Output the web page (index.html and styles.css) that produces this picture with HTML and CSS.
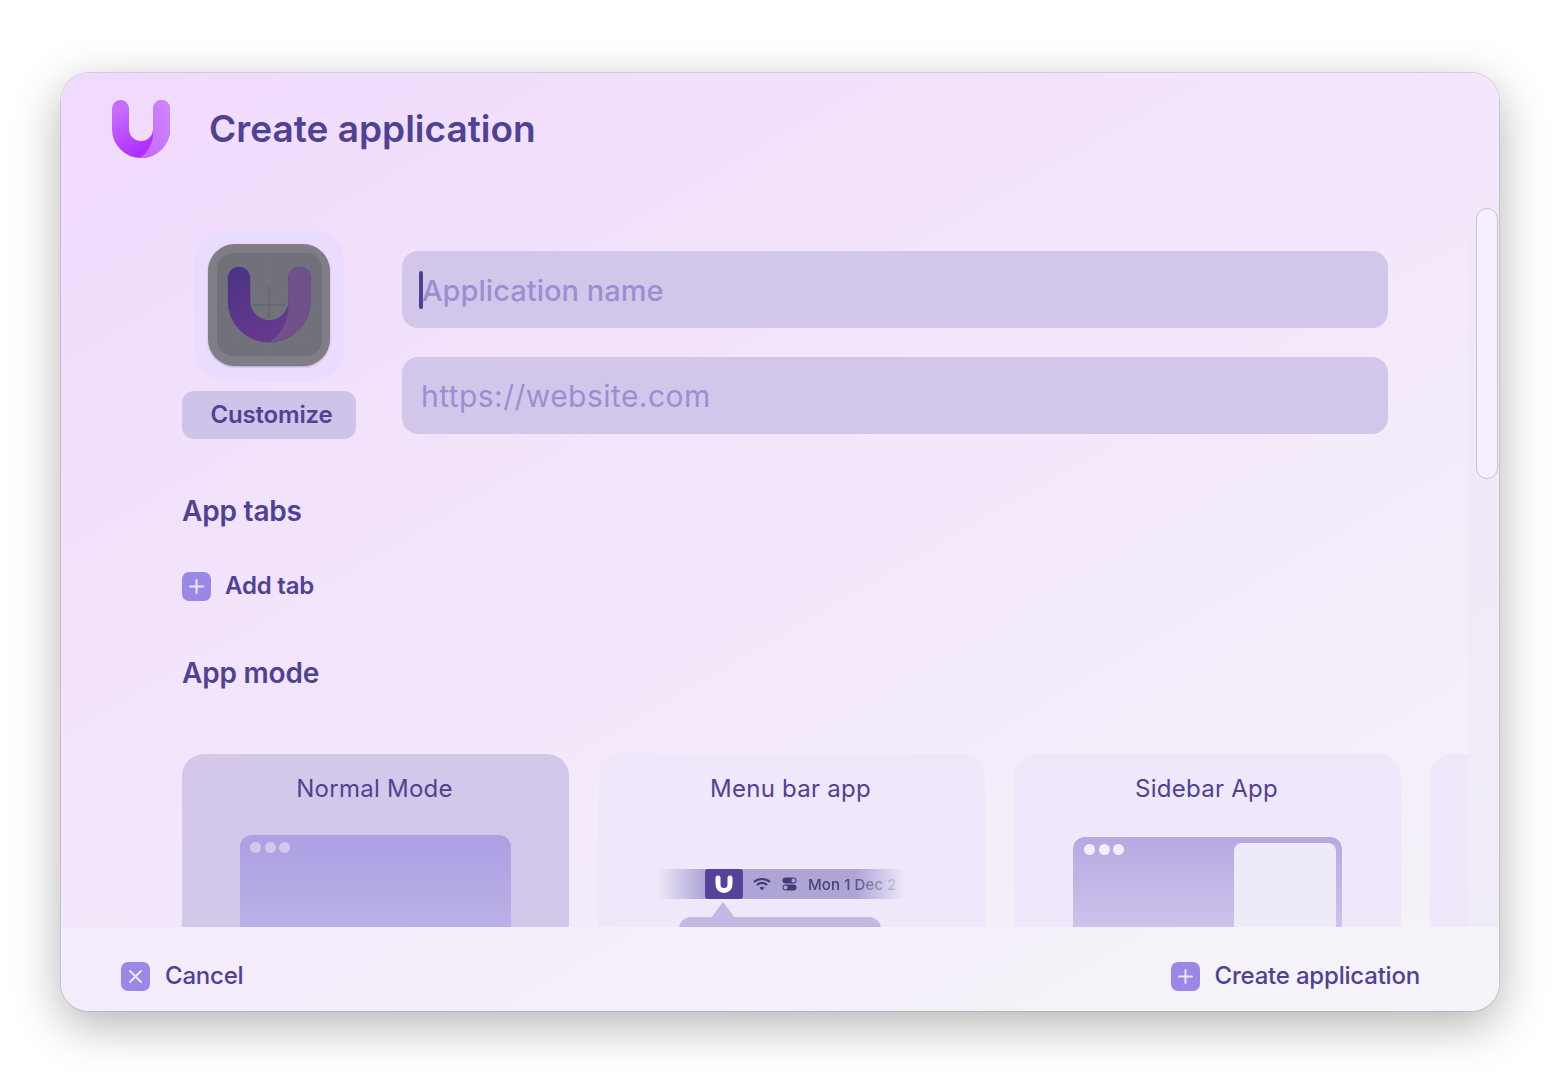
FILE: index.html
```html
<!DOCTYPE html>
<html lang="en">
<head>
<meta charset="utf-8">
<title>Create application</title>
<link rel="stylesheet" href="styles.css">
</head>
<body>
<div class="window">
  <svg width="0" height="0" class="defs">
    <defs>
      <linearGradient id="logoLeft" x1="0" y1="0" x2="0.6" y2="1">
        <stop offset="0" stop-color="#c76cff"/><stop offset="1" stop-color="#b02fff"/>
      </linearGradient>
      <linearGradient id="logoRight" x1="1" y1="0" x2="0" y2="1">
        <stop offset="0" stop-color="#cf86ff"/><stop offset="1" stop-color="#c469fb"/>
      </linearGradient>
      <linearGradient id="iconLeft" x1="0" y1="0" x2="0.6" y2="1">
        <stop offset="0" stop-color="#4f3486"/><stop offset="1" stop-color="#65388f"/>
      </linearGradient>
    </defs>
  </svg>
  <header class="header">
    <svg class="logo" viewBox="0 0 58 58" width="58" height="58" aria-hidden="true">
      <path d="M8.5 8.5V29A20.5 20.5 0 0 0 49.5 29V8.5" fill="none" stroke="url(#logoLeft)" stroke-width="17" stroke-linecap="round"/>
      <path d="M41 8.5A8.5 8.5 0 0 1 58 8.5V29A29 29 0 0 1 28 58C34 54 39 47 41 37Z" fill="url(#logoRight)"/>
    </svg>
    <h1 class="title">Create application</h1>
  </header>

  <div class="main">
    <div class="content">
      <section class="form-row">
        <div class="icon-col">
          <div class="icon-tile">
            <div class="app-icon">
              <div class="app-icon-inner"></div>
              <svg class="app-icon-art" viewBox="0 0 122 122" width="122" height="122" aria-hidden="true">
                <path d="M61 12V110M12 61H110M20 20L102 102M102 20L20 102" stroke="#787981" stroke-width=".8" fill="none"/>
                <path d="M31 34V57A30 30 0 0 0 91.5 57V34" fill="none" stroke="url(#iconLeft)" stroke-width="22.5" stroke-linecap="round"/>
                <path d="M80.25 34A11.25 11.25 0 0 1 102.75 34V57A41.25 41.25 0 0 1 61.5 98.25C70 92 78 84 80.25 66Z" fill="#71518a"/>
                <path d="M61 42V74M45 61H77" stroke="#64656e" stroke-width="1.4" fill="none"/>
              </svg>
            </div>
          </div>
          <div class="customize">Customize</div>
        </div>
        <div class="fields">
          <div class="field field-active"><span class="caret"></span><span class="placeholder placeholder-name">Application name</span></div>
          <div class="field"><span class="placeholder placeholder-url">https://website.com</span></div>
        </div>
      </section>

      <h2 class="section-title tabs-title">App tabs</h2>
      <div class="action add-tab">
        <svg class="badge" viewBox="0 0 29 29" width="29" height="29" aria-hidden="true"><rect width="29" height="29" rx="7" fill="#9b87e6"/><path d="M14.5 8V21M8 14.5H21" stroke="#ede6fb" stroke-width="2" stroke-linecap="round"/></svg>
        <span class="action-label add-tab-label">Add tab</span>
      </div>
      <h2 class="section-title mode-title">App mode</h2>

      <div class="cards">
        <article class="card card-selected">
          <div class="card-title">Normal Mode</div>
          <div class="preview-normal">
            <div class="dots"><i></i><i></i><i></i></div>
          </div>
        </article>
        <article class="card">
          <div class="card-title">Menu bar app</div>
          <div class="menubar">
            <div class="menubar-logo">
              <svg viewBox="0 0 20 20" width="20" height="20" aria-hidden="true"><path d="M4 4V10.5A6 6 0 0 0 16 10.5V4" fill="none" stroke="#fff" stroke-width="5" stroke-linecap="round"/></svg>
            </div>
            <svg class="mb-wifi" viewBox="0 0 18 14" width="18" height="14" aria-hidden="true"><path d="M1 5C5.5 1 12.5 1 17 5M3.8 8C7 5.4 11 5.4 14.2 8" fill="none" stroke="#473a78" stroke-width="2"/><path d="M6.5 10.6L9 13.4L11.5 10.6C10 9.4 8 9.4 6.5 10.6Z" fill="#473a78"/></svg>
            <svg class="mb-toggle" viewBox="0 0 15 14" width="15" height="14" aria-hidden="true"><rect x="0.5" y="0.5" width="14" height="6" rx="3" fill="#473a78"/><circle cx="11.5" cy="3.5" r="2" fill="#afa4d6"/><rect x="0.5" y="7.5" width="14" height="6" rx="3" fill="#473a78"/><circle cx="3.5" cy="10.5" r="2" fill="#afa4d6"/></svg>
            <span class="mb-date">Mon 1 Dec 2</span>
          </div>
          <div class="popover"></div>
        </article>
        <article class="card">
          <div class="card-title">Sidebar App</div>
          <div class="preview-sidebar">
            <div class="dots dots-light"><i></i><i></i><i></i></div>
            <div class="sidebar-panel"></div>
          </div>
        </article>
        <article class="card"></article>
      </div>
    </div>
    <div class="scroll-track"><div class="scroll-thumb"></div></div>
  </div>

  <footer class="footer">
    <div class="action">
      <svg class="badge" viewBox="0 0 29 29" width="29" height="29" aria-hidden="true"><rect width="29" height="29" rx="7" fill="#9b87e6"/><path d="M9 9L20 20M20 9L9 20" stroke="#ede6fb" stroke-width="2" stroke-linecap="round"/></svg>
      <span class="action-label">Cancel</span>
    </div>
    <div class="action">
      <svg class="badge" viewBox="0 0 29 29" width="29" height="29" aria-hidden="true"><rect width="29" height="29" rx="7" fill="#9b87e6"/><path d="M14.5 8V21M8 14.5H21" stroke="#ede6fb" stroke-width="2" stroke-linecap="round"/></svg>
      <span class="action-label">Create application</span>
    </div>
  </footer>
</div>
</body>
</html>
```

FILE: styles.css
```css
* { box-sizing: border-box; }
html, body { margin: 0; height: 100%; }
body {
  background: #fff;
  padding: 73px 61px 0;
  font-family: Inter, "Noto Sans", sans-serif;
  color: #4f4294;
  overflow: hidden;
}
.defs { position: absolute; }
.window {
  width: 1438px;
  height: 938px;
  border-radius: 28px;
  display: flex;
  flex-direction: column;
  overflow: hidden;
  background: linear-gradient(150deg, #f0dafd 0%, #f3e7fb 48%, #f5f3f8 100%);
  box-shadow: 0 0 0 1px rgba(120, 100, 160, .22), 0 14px 48px rgba(0, 0, 0, .30);
}
.header {
  height: 130px;
  flex: none;
  display: flex;
  align-items: flex-start;
  padding: 27px 0 0 51px;
}
.logo { flex: none; }
.title {
  margin: 5px 0 0 39px;
  font-size: 37px;
  line-height: 48px;
  font-weight: 600;
  letter-spacing: .02px;
}
.main {
  height: 724px;
  flex: none;
  display: flex;
}
.content {
  flex: 1;
  min-width: 0;
  overflow: hidden;
  padding: 28px 0 0 121px;
}
.form-row {
  display: flex;
  gap: 46px;
}
.icon-col {
  width: 174px;
  display: flex;
  flex-direction: column;
  align-items: center;
  gap: 10px;
}
.icon-tile {
  width: 150px;
  height: 150px;
  padding-bottom: 2px;
  border-radius: 30px;
  background: #e9dcff;
  display: flex;
  align-items: center;
  justify-content: center;
}
.app-icon {
  position: relative;
  width: 122px;
  height: 122px;
  border-radius: 27px;
  background: #807d87;
  box-shadow: 0 1px 2px rgba(60, 50, 90, .35);
}
.app-icon-inner {
  position: absolute;
  inset: 9px 8px 10px 9px;
  border-radius: 16px;
  background: #70717a;
}
.app-icon-art { position: absolute; inset: 0; }
.customize {
  width: 174px;
  height: 48px;
  border-radius: 12px;
  background: #d0c3e9;
  font-size: 24px;
  font-weight: 600;
  line-height: 48px;
  text-align: center;
  padding-left: 5px;
  letter-spacing: -.2px;
}
.fields {
  width: 986px;
  padding-top: 20px;
  display: flex;
  flex-direction: column;
  gap: 29px;
}
.field {
  height: 77px;
  border-radius: 16px;
  background: #d2c6ea;
  padding: 2px 0 0 19px;
  display: flex;
  align-items: center;
}
.field-active { padding-left: 17px; }
.caret {
  width: 4px;
  height: 38px;
  margin-top: -2px;
  border-radius: 2px;
  background: #4f3f93;
  margin-right: -1px;
}
.placeholder {
  font-size: 29px;
  font-weight: 450;
  color: #9a8fd3;
}
.placeholder-name { letter-spacing: .03px; }
.placeholder-url { font-size: 30px; font-weight: 400; letter-spacing: .45px; margin-top: -2px; }
.section-title {
  margin: 0;
  font-size: 28px;
  line-height: 36px;
  font-weight: 600;
  letter-spacing: -.2px;
}
.tabs-title { margin-top: 54px; }
.mode-title { margin-top: 54px; }
.action {
  display: flex;
  align-items: center;
  gap: 15px;
}
.add-tab { margin-top: 43px; }
.badge { flex: none; }
.action-label {
  font-size: 24px;
  font-weight: 500;
  line-height: 27px;
  padding-bottom: 2px;
  letter-spacing: -.2px;
}
.add-tab-label { font-weight: 600; margin-left: -1px; }
.cards {
  display: flex;
  gap: 29px;
  margin-top: 63px;
}
.card {
  position: relative;
  flex: none;
  width: 387px;
  height: 300px;
  border-radius: 22px 22px 0 0;
  background: #eee8fa;
  overflow: hidden;
}
.card-selected { background: #d3c8e9; }
.card-title {
  text-align: center;
  font-size: 24px;
  line-height: 30px;
  padding-top: 20px;
  padding-right: 2px;
  letter-spacing: .25px;
}
.preview-normal {
  width: 271px;
  height: 200px;
  margin: 31px 0 0 58px;
  border-radius: 12px 12px 0 0;
  padding: 7px 0 0 10px;
  background: linear-gradient(#ad9fe3, #bbb0e6 92px);
}
.dots { display: flex; gap: 3.5px; }
.dots i {
  width: 11px;
  height: 11px;
  border-radius: 50%;
  background: #d3c8e9;
}
.dots-light i { background: #f3eefc; }
.menubar {
  position: absolute;
  left: 60px;
  top: 115px;
  width: 247px;
  height: 30px;
  display: flex;
  align-items: center;
  background: linear-gradient(90deg, rgba(175, 164, 214, 0) 0%, #afa4d6 19%, #afa4d6 80%, rgba(175, 164, 214, 0) 100%);
  padding-left: 47px;
}
.menubar-logo {
  flex: none;
  width: 38px;
  height: 30px;
  border-radius: 3px;
  background: #55439a;
  display: flex;
  align-items: center;
  justify-content: center;
}
.mb-wifi { flex: none; margin-left: 10px; }
.mb-toggle { flex: none; margin-left: 11px; }
.mb-date {
  flex: none;
  margin-left: 11px;
  font-size: 15px;
  font-weight: 500;
  letter-spacing: .1px;
  color: #4a4276;
  white-space: nowrap;
  -webkit-mask-image: linear-gradient(90deg, #000 40%, rgba(0, 0, 0, .15) 100%);
  mask-image: linear-gradient(90deg, #000 40%, rgba(0, 0, 0, .15) 100%);
}
.popover {
  position: absolute;
  left: 81px;
  top: 163px;
  width: 202px;
  height: 60px;
  border-radius: 12px 12px 0 0;
  background: #c2b8e2;
}
.popover::before {
  content: "";
  position: absolute;
  left: 32px;
  top: -15px;
  width: 24px;
  height: 16px;
  background: #c2b8e2;
  clip-path: polygon(50% 0, 100% 100%, 0 100%);
}
.preview-sidebar {
  position: relative;
  width: 269px;
  height: 200px;
  margin: 33px 0 0 59px;
  border-radius: 12px 12px 0 0;
  padding: 7px 0 0 11px;
  background: linear-gradient(#b6a8e2, #cdc3ec 92px);
}
.sidebar-panel {
  position: absolute;
  left: 161px;
  right: 6px;
  top: 6px;
  bottom: 0;
  border-radius: 8px 8px 0 0;
  background: #efeaf8;
}
.scroll-track {
  flex: none;
  width: 31px;
  padding: 5px 1px 0 8px;
  background: rgba(235, 230, 245, .4);
}
.scroll-thumb {
  height: 271px;
  border-radius: 11px;
  background: #f5f0fb;
  border: 1.5px solid #c9c0d3;
}
.footer {
  flex: 1;
  display: flex;
  align-items: flex-start;
  justify-content: space-between;
  padding: 35px 79px 0 60px;
  background: rgba(248, 246, 250, .25);
}
```
